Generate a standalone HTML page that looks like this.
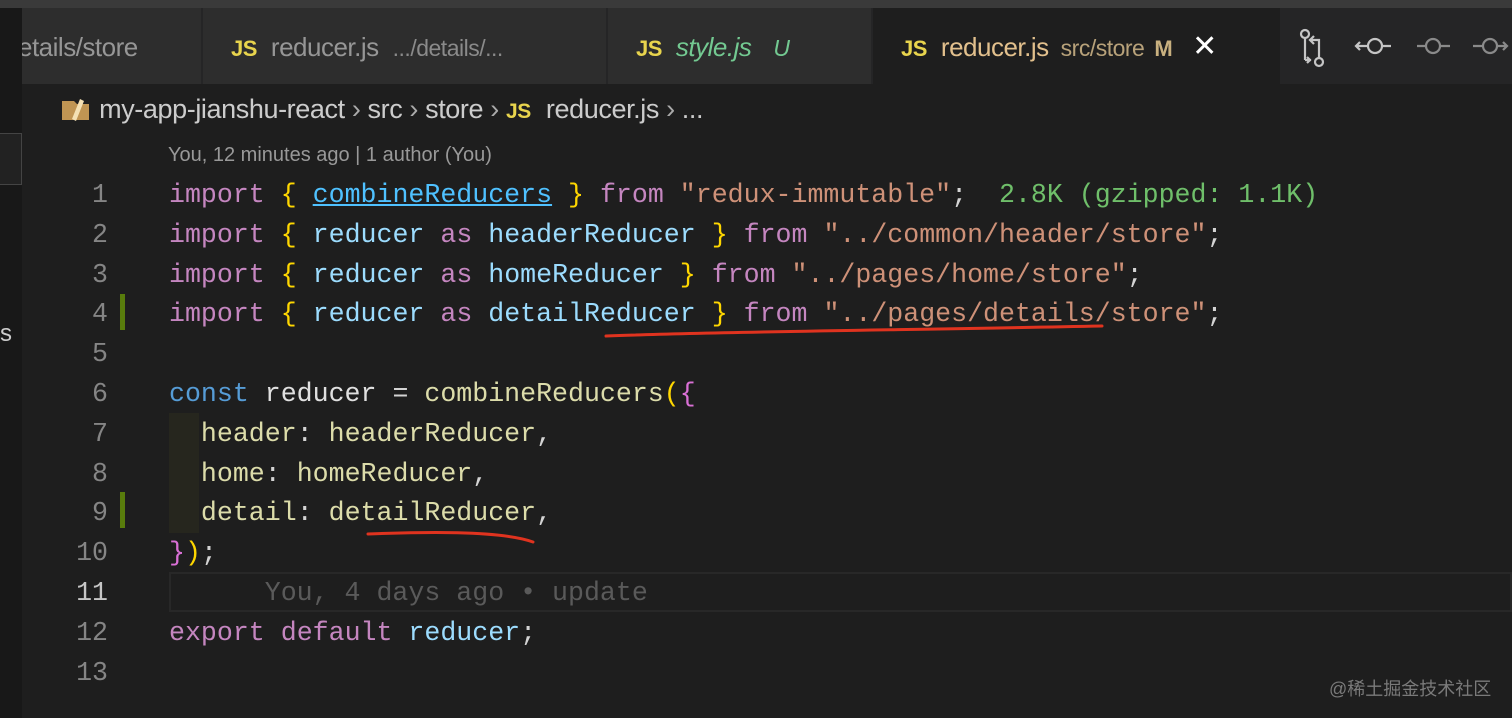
<!DOCTYPE html>
<html><head><meta charset="utf-8"><style>
*{margin:0;padding:0;box-sizing:border-box}
body{width:1512px;height:718px;background:#1e1e1e;position:relative;overflow:hidden;font-family:"Liberation Sans",sans-serif}
.top{position:absolute;left:0;top:0;width:1512px;height:8px;background:#3a3a3a}
.side{position:absolute;left:0;top:8px;width:22px;height:710px;background:#181818}
.tabs{position:absolute;left:22px;top:8px;width:1490px;height:76px;background:#252526}
.tab{position:absolute;top:0;height:76px;background:#2d2d2d;border-right:1px solid #252526;font-size:26px;line-height:78px;white-space:nowrap;overflow:hidden;color:#969696;letter-spacing:-0.5px}
.js{color:#e8d44d;font-weight:bold;font-size:22px;margin-right:14px}
.dim{color:#8a8a8a;font-size:23px;margin-left:8px}
.code{position:absolute;left:0;top:176px;font-family:"Liberation Mono",monospace;font-size:26.6px;line-height:39.8px;white-space:pre;color:#d4d4d4}
.ln{position:absolute;left:0;width:108px;text-align:right;color:#858585;font-family:"Liberation Mono",monospace;font-size:26.6px}
.k{color:#c586c0}.b{color:#9cdcfe}.y{color:#ffd700}.s{color:#ce9178}.f{color:#dcdcaa}.c{color:#569cd6}.g{color:#6fbf6a}.p{color:#da70d6}
</style></head><body>
<div class="top"></div>
<div class="side"><div style="position:absolute;left:0;top:125px;width:22px;height:52px;border:1px solid #444;border-left:none;background:#222"></div><div style="position:absolute;left:0;top:312px;color:#ccc;font-size:24px">s</div></div>
<div class="tabs">
 <div class="tab" style="left:0;width:180px;padding-left:0"><span style="margin-left:-4px">etails/store</span></div>
 <div class="tab" style="left:181px;width:404px;padding-left:28px"><span class="js">JS</span>reducer.js<span class="dim" style="margin-left:14px">.../details/...</span></div>
 <div class="tab" style="left:586px;width:264px;padding-left:28px"><span class="js">JS</span><i style="color:#73c991">style.js</i><i style="color:#73c991;margin-left:22px;font-size:23px">U</i></div>
 <div class="tab" style="left:851px;width:408px;padding-left:28px;background:#1e1e1e;color:#e2c08d"><span class="js">JS</span>reducer.js<span style="color:#b8a27a;font-size:23px;margin-left:12px">src/store</span><span style="color:#c8b07f;font-size:22px;font-weight:bold;margin-left:10px">M</span><span style="color:#fff;font-size:30px;margin-left:20px">✕</span></div>
 <svg style="position:absolute;left:1275px;top:20px" width="215" height="40" viewBox="0 0 215 40" fill="none" stroke="#c5c5c5" stroke-width="2.2">
  <circle cx="8" cy="6" r="4"/><path d="M8 10v22"/><circle cx="22" cy="34" r="4"/><path d="M22 30V12h-8M17 8l-4 4 4 4"/><path d="M8 32h6M10 29l3 3-3 3"/>
  <circle cx="78" cy="18" r="7"/><path d="M85 18h9M71 18h-12M63 14l-4 4 4 4"/>
  <g stroke="#8a8a8a"><circle cx="136" cy="18" r="7"/><path d="M120 18h9M143 18h10"/><circle cx="193" cy="18" r="7"/><path d="M176 18h10M200 18h10M206 14l4 4-4 4"/></g>
 </svg>
</div>
<div style="position:absolute;left:60px;top:94px;font-size:27px;color:#cccccc;white-space:nowrap;letter-spacing:-0.4px">
 <svg width="32" height="26" style="vertical-align:-3px"><path d="M2 6h12l3 3h12v16H2z" fill="#c09553"/><path d="M20 4l4 2-8 20-4-2z" fill="#f4e1b4"/></svg>
 my-app-jianshu-react <span style="color:#aaa">›</span> src <span style="color:#aaa">›</span> store <span style="color:#aaa">›</span> <span class="js" style="font-size:21px;margin-right:8px">JS</span> reducer.js <span style="color:#aaa">›</span> ...
</div>
<div style="position:absolute;left:168px;top:144px;font-size:20px;color:#999">You, 12 minutes ago | 1 author (You)</div>
<div style="position:absolute;left:169px;top:572px;width:1343px;height:40px;border:2px solid #282828"></div>
<div style="position:absolute;left:169px;top:413px;width:30px;height:120px;background:#26261e"></div>
<div style="position:absolute;left:120px;top:294px;width:5px;height:36px;background:#587c0c"></div>
<div style="position:absolute;left:120px;top:492px;width:5px;height:36px;background:#587c0c"></div>
<div style="position:absolute;left:0;top:176px;line-height:39.8px">
<div class="ln" style="top:0">1</div><div class="ln" style="top:39.8px">2</div><div class="ln" style="top:79.6px">3</div><div class="ln" style="top:119.4px">4</div><div class="ln" style="top:159.2px">5</div><div class="ln" style="top:199px">6</div><div class="ln" style="top:238.8px">7</div><div class="ln" style="top:278.6px">8</div><div class="ln" style="top:318.4px">9</div><div class="ln" style="top:358.2px">10</div><div class="ln" style="top:398px;color:#c6c6c6">11</div><div class="ln" style="top:437.8px">12</div><div class="ln" style="top:477.6px">13</div>
</div>
<div class="code" style="left:169px"><span class="k">import</span> <span class="y">{</span> <span class="b" style="color:#4fc1ff;text-decoration:underline">combineReducers</span> <span class="y">}</span> <span class="k">from</span> <span class="s">"redux-immutable"</span>;  <span class="g">2.8K (gzipped: 1.1K)</span>
<span class="k">import</span> <span class="y">{</span> <span class="b">reducer</span> <span class="k">as</span> <span class="b">headerReducer</span> <span class="y">}</span> <span class="k">from</span> <span class="s">"../common/header/store"</span>;
<span class="k">import</span> <span class="y">{</span> <span class="b">reducer</span> <span class="k">as</span> <span class="b">homeReducer</span> <span class="y">}</span> <span class="k">from</span> <span class="s">"../pages/home/store"</span>;
<span class="k">import</span> <span class="y">{</span> <span class="b">reducer</span> <span class="k">as</span> <span class="b">detailReducer</span> <span class="y">}</span> <span class="k">from</span> <span class="s">"../pages/details/store"</span>;

<span class="c">const</span> <span style="color:#e0e0e0">reducer</span> = <span class="f">combineReducers</span><span class="y">(</span><span class="p">{</span>
  <span class="f">header</span>: <span class="f">headerReducer</span>,
  <span class="f">home</span>: <span class="f">homeReducer</span>,
  <span class="f">detail</span>: <span class="f">detailReducer</span>,
<span class="p">}</span><span class="y">)</span>;
      <span style="color:#5a5a5a">You, 4 days ago • update</span>
<span class="k">export</span> <span class="k">default</span> <span class="b">reducer</span>;
</div>
<svg style="position:absolute;left:0;top:0" width="1512" height="718" fill="none" stroke="#e0331f" stroke-width="3" stroke-linecap="round">
 <path d="M606 336 C 700 332, 900 330, 1102 326"/>
 <path d="M368 534 C 420 532, 500 530, 533 542"/>
</svg>
<div style="position:absolute;left:1329px;top:675px;font-size:18px;color:#7a7a7a;font-family:'Liberation Sans','Noto Sans CJK SC',sans-serif">@稀土掘金技术社区</div>
</body></html>
